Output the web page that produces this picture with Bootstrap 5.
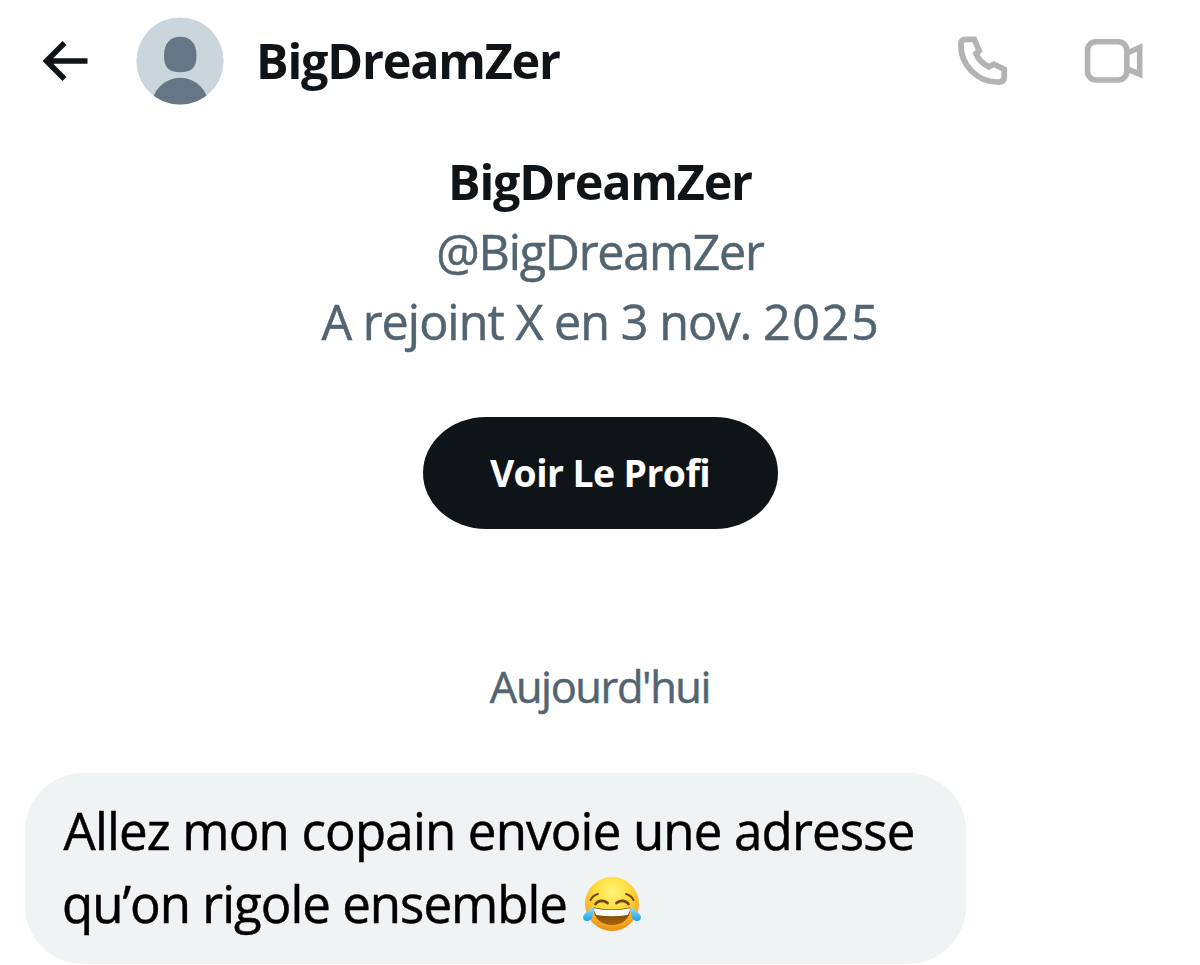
<!DOCTYPE html>
<html lang="fr">
<head>
<meta charset="utf-8">
<meta name="viewport" content="width=device-width, initial-scale=1">
<title>BigDreamZer</title>
<link href="https://cdn.jsdelivr.net/npm/bootstrap@5.3.0/dist/css/bootstrap.min.css" rel="stylesheet">
<style>
body{font-family:"Open Sans",sans-serif;font-weight:450;color:#0f1419;background:#fff;overflow:hidden}
svg{display:block;flex:none}
.topbar{height:122px;padding:0 56px 0 41px}
.avatar{margin-left:47px}
.video{margin-left:76px}
.strong-name{font-size:48.5px;font-weight:670;letter-spacing:-1.2px;line-height:70px}
.topbar .strong-name{margin:-2px 0 0 32px}
.profile{padding-top:24px}
.meta-line{font-size:48.5px;line-height:70px;color:#536471}
.meta-line,.day,.bubble{-webkit-text-stroke:.5px}
.handle{letter-spacing:-1.25px}
.joined{letter-spacing:-.96px}
.year{letter-spacing:1.6px;margin-right:-1.6px}
.btn-profile,.btn-profile:hover{width:355px;height:112px;margin-top:61px;padding:0;border:0;border-radius:63px/56px;background:#0f1419;color:#fff;font-size:37.4px;font-weight:660;letter-spacing:-.6px}
.day{margin-top:128px;font-size:43.4px;line-height:60px;letter-spacing:-1.4px;color:#536471}
.bubble{width:941px;height:191px;margin:56px 0 0 25px;padding:21px 0 0 38.5px;border-radius:58px;background:#eff3f4;color:#000;font-size:51px;line-height:73.3px;white-space:nowrap}
.line-a{letter-spacing:-.82px}
.line-b{letter-spacing:-1px;margin-left:-1.5px}
.emoji{margin-left:15px}
</style>
</head>
<body>
<header class="topbar d-flex align-items-center">
  <svg width="48" height="44" viewBox="41 39 48 44" fill="none" stroke="#0f1419" stroke-width="5.6" role="img" aria-label="Retour"><path d="M87.500 61H46.500M64.500 43l-18 18 18 18"/></svg>
  <svg class="avatar" width="88" height="88" viewBox="136 17 88 88" role="img" aria-label="Avatar">
    <clipPath id="disc"><circle cx="180" cy="61" r="43.6"/></clipPath>
    <g clip-path="url(#disc)"><rect x="136" y="17" width="88" height="88" fill="#cbd6dc"/>
    <path d="M180.200 36.700C190.500 36.700 196.500 43.500 196.500 55.500C196.500 68 191.500 72.200 180.200 72.200S164 68 164 55.500C164 43.500 170 36.700 180.200 36.700Z" fill="#657786"/>
    <circle cx="180.200" cy="106.300" r="28.500" fill="#657786"/></g>
  </svg>
  <div class="strong-name">BigDreamZer</div>
  <div class="d-flex ms-auto align-items-center">
    <svg width="52" height="52" viewBox="956 35 52 52" fill="none" stroke="#b1b3b5" stroke-width="5.8" role="img" aria-label="Appel audio"><path d="M966 39.300H974.300L979.200 50.700L976 53.800C978.500 59.500 983 64 989 66.800L993.800 64.200L1004.200 69.200V76.500Q1004.200 82.200 998.500 82.200C977.500 82.200 960.800 65.500 960.800 44.500Q960.800 39.300 966 39.300Z"/></svg>
    <svg class="video" width="60" height="48" viewBox="1084.500 37 60 48" fill="none" stroke="#b1b3b5" stroke-width="5.600" role="img" aria-label="Appel vidéo"><rect x="1088" y="41.700" width="39.300" height="38.300" rx="8.500"/><path d="M1127 53.300L1140.200 47.500V74.200L1127 68.600"/></svg>
  </div>
</header>
<main>
  <section class="profile d-flex flex-column align-items-center text-center">
    <div class="strong-name">BigDreamZer</div>
    <div class="meta-line handle">@BigDreamZer</div>
    <div class="meta-line joined text-nowrap">A rejoint X en 3 nov. <span class="year">2025</span></div>
    <button type="button" class="btn btn-profile">Voir Le Profi</button>
    <div class="day">Aujourd'hui</div>
  </section>
  <div class="bubble">
    <div class="line-a">Allez mon copain envoie une adresse</div>
    <div class="line-b d-flex align-items-center"><span>qu’on rigole ensemble</span>
      <svg class="emoji" width="60" height="58" viewBox="0 0 60 58" role="img" aria-label="Visage avec larmes de joie">
        <defs>
          <radialGradient id="face" cx=".5" cy=".28" r=".72"><stop offset="0" stop-color="#fff27a"/><stop offset=".45" stop-color="#ffdc3b"/><stop offset=".8" stop-color="#f9ae25"/><stop offset="1" stop-color="#e88b13"/></radialGradient>
          <linearGradient id="tear" x1="0" y1="0" x2="0" y2="1"><stop offset="0" stop-color="#9be3fb"/><stop offset="1" stop-color="#1b9fe8"/></linearGradient>
          <linearGradient id="mouth" x1="0" y1="0" x2="0" y2="1"><stop offset="0" stop-color="#6b3a05"/><stop offset="1" stop-color="#a86608"/></linearGradient>
        </defs>
        <circle cx="30" cy="29" r="27" fill="url(#face)"/>
        <g fill="none" stroke="#75450b" stroke-linecap="round">
          <path d="M8.500 25C10 22 12.500 19.800 16 19M51.500 25C50 22 47.500 19.800 44 19" stroke-width="2"/>
          <path d="M13.500 29C16.500 25 22 25 25.500 28M34.500 28C38 25 43.500 25 46.500 29" stroke-width="2.800"/>
        </g>
        <path d="M11.500 32.500Q30 36.500 48.500 32.500C48.500 43 41 50 30 50S11.500 43 11.500 32.500Z" fill="url(#mouth)"/>
        <path d="M12 33.200Q30 37 48 33.200C48 36.500 47 38.500 45.500 40Q30 42.500 14.500 40C13 38.500 12 36.500 12 33.200Z" fill="#fff"/>
        <path d="M11.500 31.500C11.500 38 11 45.500 5.500 46C1 46.300-.5 41.800 3 38.500C6 35.500 8.500 34 11.500 31.500ZM48.500 31.500C48.500 38 49 45.500 54.500 46C59 46.300 60.500 41.800 57 38.500C54 35.500 51.500 34 48.500 31.500Z" fill="url(#tear)"/>
      </svg>
    </div>
  </div>
</main>
<script src="https://cdn.jsdelivr.net/npm/bootstrap@5.3.0/dist/js/bootstrap.bundle.min.js"></script>
</body>
</html>
